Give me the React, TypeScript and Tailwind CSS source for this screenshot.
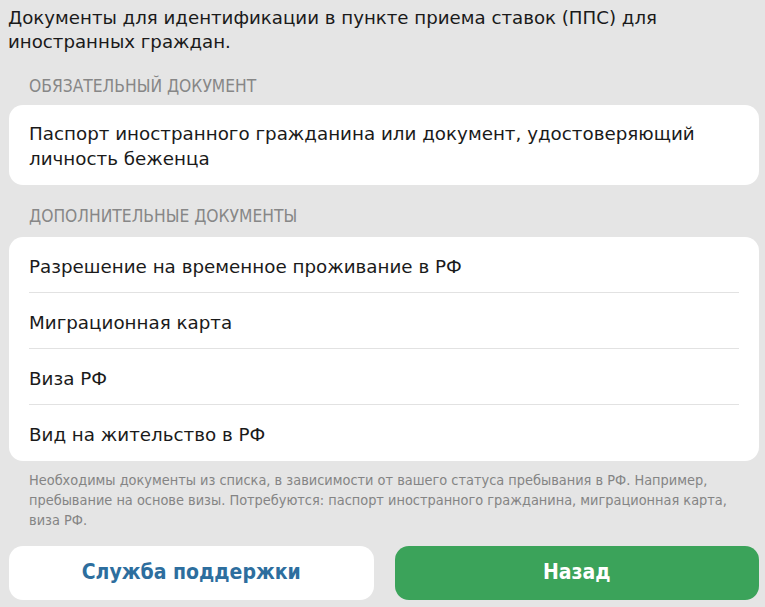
import React from 'react';

const extraDocs = [
  'Разрешение на временное проживание в РФ',
  'Миграционная карта',
  'Виза РФ',
  'Вид на жительство в РФ',
];

const App: React.FC = () => {
  return (
    <div className="h-[607px] w-full overflow-hidden bg-[#e5e5e5] text-[#1a1a1a] font-['DejaVu_Sans',sans-serif]">
      {/* Title */}
      <div className="px-[8px] pt-[6px] text-[18.2px] leading-[24px]">
        Документы для идентификации в пункте приема ставок (ППС) для иностранных граждан.
      </div>

      {/* Required */}
      <div className="px-[29px] pt-[22px] pb-[9px] font-['DejaVu_Sans_Condensed',sans-serif] text-[17.3px] leading-[20px] text-[#878787]">
        ОБЯЗАТЕЛЬНЫЙ ДОКУМЕНТ
      </div>
      <div className="ml-[9px] mr-[6px] rounded-[14px] bg-white px-[20px] pt-[16px] pb-[14px] text-[18.3px] leading-[25px]">
        Паспорт иностранного гражданина или документ, удостоверяющий личность беженца
      </div>

      {/* Additional */}
      <div className="px-[29px] pt-[21px] pb-[11px] font-['DejaVu_Sans_Condensed',sans-serif] text-[17.3px] leading-[20px] text-[#878787]">
        ДОПОЛНИТЕЛЬНЫЕ ДОКУМЕНТЫ
      </div>
      <div className="ml-[9px] mr-[6px] rounded-[14px] bg-white px-[20px]">
        {extraDocs.map((doc, i) => (
          <div
            key={doc}
            className={`flex h-[56px] items-center pt-[4px] text-[18.3px] ${i < extraDocs.length - 1 ? 'border-b border-[#e2e2e2]' : ''}`}
          >
            {doc}
          </div>
        ))}
      </div>

      {/* Note */}
      <div className="pl-[29px] pt-[9px] pr-[30px] font-['DejaVu_Sans_Condensed',sans-serif] text-[14.4px] leading-[20px] text-[#848484]">
        Необходимы документы из списка, в зависимости от вашего статуса пребывания в РФ. Например, пребывание на основе визы. Потребуются: паспорт иностранного гражданина, миграционная карта, виза РФ.
      </div>

      {/* Buttons */}
      <div className="flex gap-[21px] pl-[9px] pr-[6px] pt-[16px]">
        <button className="flex h-[54px] flex-1 items-center justify-center rounded-[14px] bg-white font-['DejaVu_Sans_Condensed',sans-serif] text-[21px] font-bold text-[#2d6e9e]">
          Служба поддержки
        </button>
        <button className="flex h-[54px] flex-1 items-center justify-center rounded-[14px] bg-[#3ba35a] font-['DejaVu_Sans_Condensed',sans-serif] text-[21px] font-bold text-white">
          Назад
        </button>
      </div>
    </div>
  );
};

export default App;
